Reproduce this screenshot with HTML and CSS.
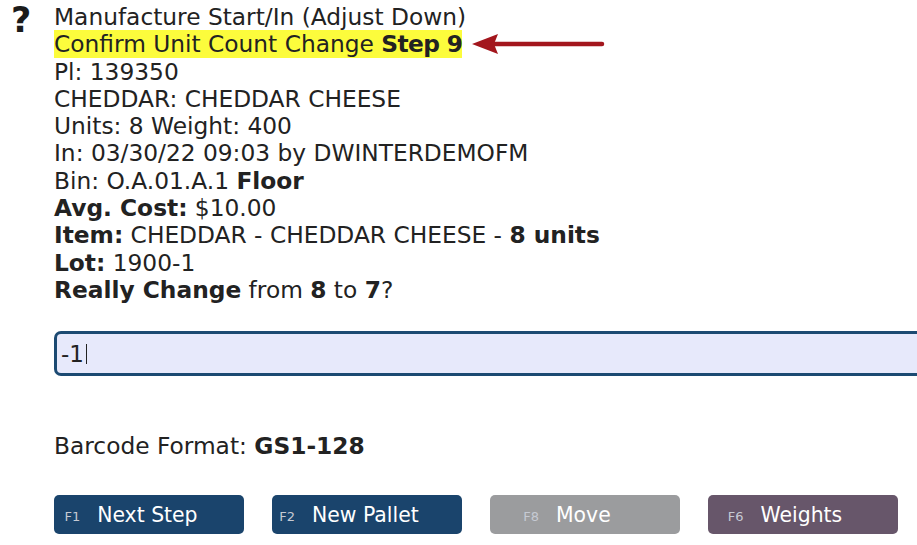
FILE: index.html
```html
<!DOCTYPE html>
<html>
<head>
<meta charset="utf-8">
<link rel="stylesheet" href="styles.css">
</head>
<body>
<div class="page">
  <div class="icon-col"><span class="help">?</span></div>
  <div class="main">
    <div class="info">
      <div class="line">Manufacture Start/In (Adjust Down)</div>
      <div class="line step-line">
        <span class="hl">Confirm Unit Count Change <b class="step">Step 9</b></span>
        <svg class="arrow" width="140" height="24" viewBox="0 0 140 24">
          <path d="M1 12 L27 2 L23 12 L27 22 Z" fill="#a3161d"/>
          <line x1="22" y1="12" x2="131" y2="12" stroke="#a3161d" stroke-width="4.5" stroke-linecap="round"/>
        </svg>
      </div>
      <div class="line">Pl: 139350</div>
      <div class="line">CHEDDAR: CHEDDAR CHEESE</div>
      <div class="line">Units: 8 Weight: 400</div>
      <div class="line">In: 03/30/22 09:03 by DWINTERDEMOFM</div>
      <div class="line">Bin: O.A.01.A.1 <b>Floor</b></div>
      <div class="line"><b>Avg. Cost:</b> $10.00</div>
      <div class="line"><b>Item:</b> CHEDDAR - CHEDDAR CHEESE - <b>8 units</b></div>
      <div class="line"><b>Lot:</b> 1900-1</div>
      <div class="line"><b>Really Change</b> from <b>8</b> to <b>7</b>?</div>
    </div>
    <div class="input"><span class="val">-1</span><span class="caret"></span></div>
    <div class="barcode">Barcode Format: <b>GS1-128</b></div>
    <div class="buttons">
      <div class="btn blue"><span class="key">F1</span><span class="lbl">Next Step</span></div>
      <div class="btn blue"><span class="key">F2</span><span class="lbl">New Pallet</span></div>
      <div class="btn gray"><span class="key">F8</span><span class="lbl">Move</span></div>
      <div class="btn purple"><span class="key">F6</span><span class="lbl">Weights</span></div>
    </div>
  </div>
</div>
</body>
</html>
```
FILE: styles.css
```css
html, body {
  margin: 0;
  padding: 0;
  background: #ffffff;
  overflow: hidden;
}
body {
  width: 917px;
  height: 545px;
  font-family: "DejaVu Sans", Verdana, sans-serif;
  color: #222222;
}
.page {
  display: flex;
  padding-top: 3px;
}
.icon-col {
  width: 54px;
  flex: none;
}
.help {
  display: block;
  margin-left: 11px;
  margin-top: 1px;
  font-family: "DejaVu Sans", sans-serif;
  font-weight: bold;
  font-size: 35px;
  line-height: 32px;
  color: #1b1b1b;
}
.main {
  flex: 1;
  min-width: 0;
}
.info {
  font-size: 23.3px;
  line-height: 27.3px;
}
.line {
  white-space: nowrap;
}
.step-line {
  display: flex;
  align-items: center;
}
.hl {
  background: #fcfc3c;
}
.step {
  letter-spacing: -0.6px;
}
.arrow {
  margin-left: 9px;
  flex: none;
}
.input {
  margin-top: 28px;
  height: 39px;
  border: 3px solid #1c4a72;
  border-right: none;
  border-radius: 7px 0 0 7px;
  background: #e7e9fb;
  display: flex;
  align-items: center;
  padding-left: 4px;
  font-size: 23px;
}
.caret {
  display: inline-block;
  width: 1px;
  height: 20px;
  background: #222;
  margin-left: 2px;
}
.barcode {
  margin-top: 56px;
  font-size: 23.3px;
  line-height: 27px;
}
.buttons {
  display: flex;
  gap: 28px;
  margin-top: 36px;
}
.btn {
  width: 190px;
  height: 39px;
  box-sizing: border-box;
  border-radius: 5px;
  display: flex;
  align-items: center;
  justify-content: center;
  padding-right: 36px;
  color: #ffffff;
}
.btn .key {
  font-size: 13px;
  color: #c6cad3;
  margin-right: 17px;
  margin-top: 4px;
}
.btn .lbl {
  font-size: 20.4px;
}
.blue { background: #1a446c; }
.gray { background: #9b9c9e; }
.purple { background: #67566a; }
```
